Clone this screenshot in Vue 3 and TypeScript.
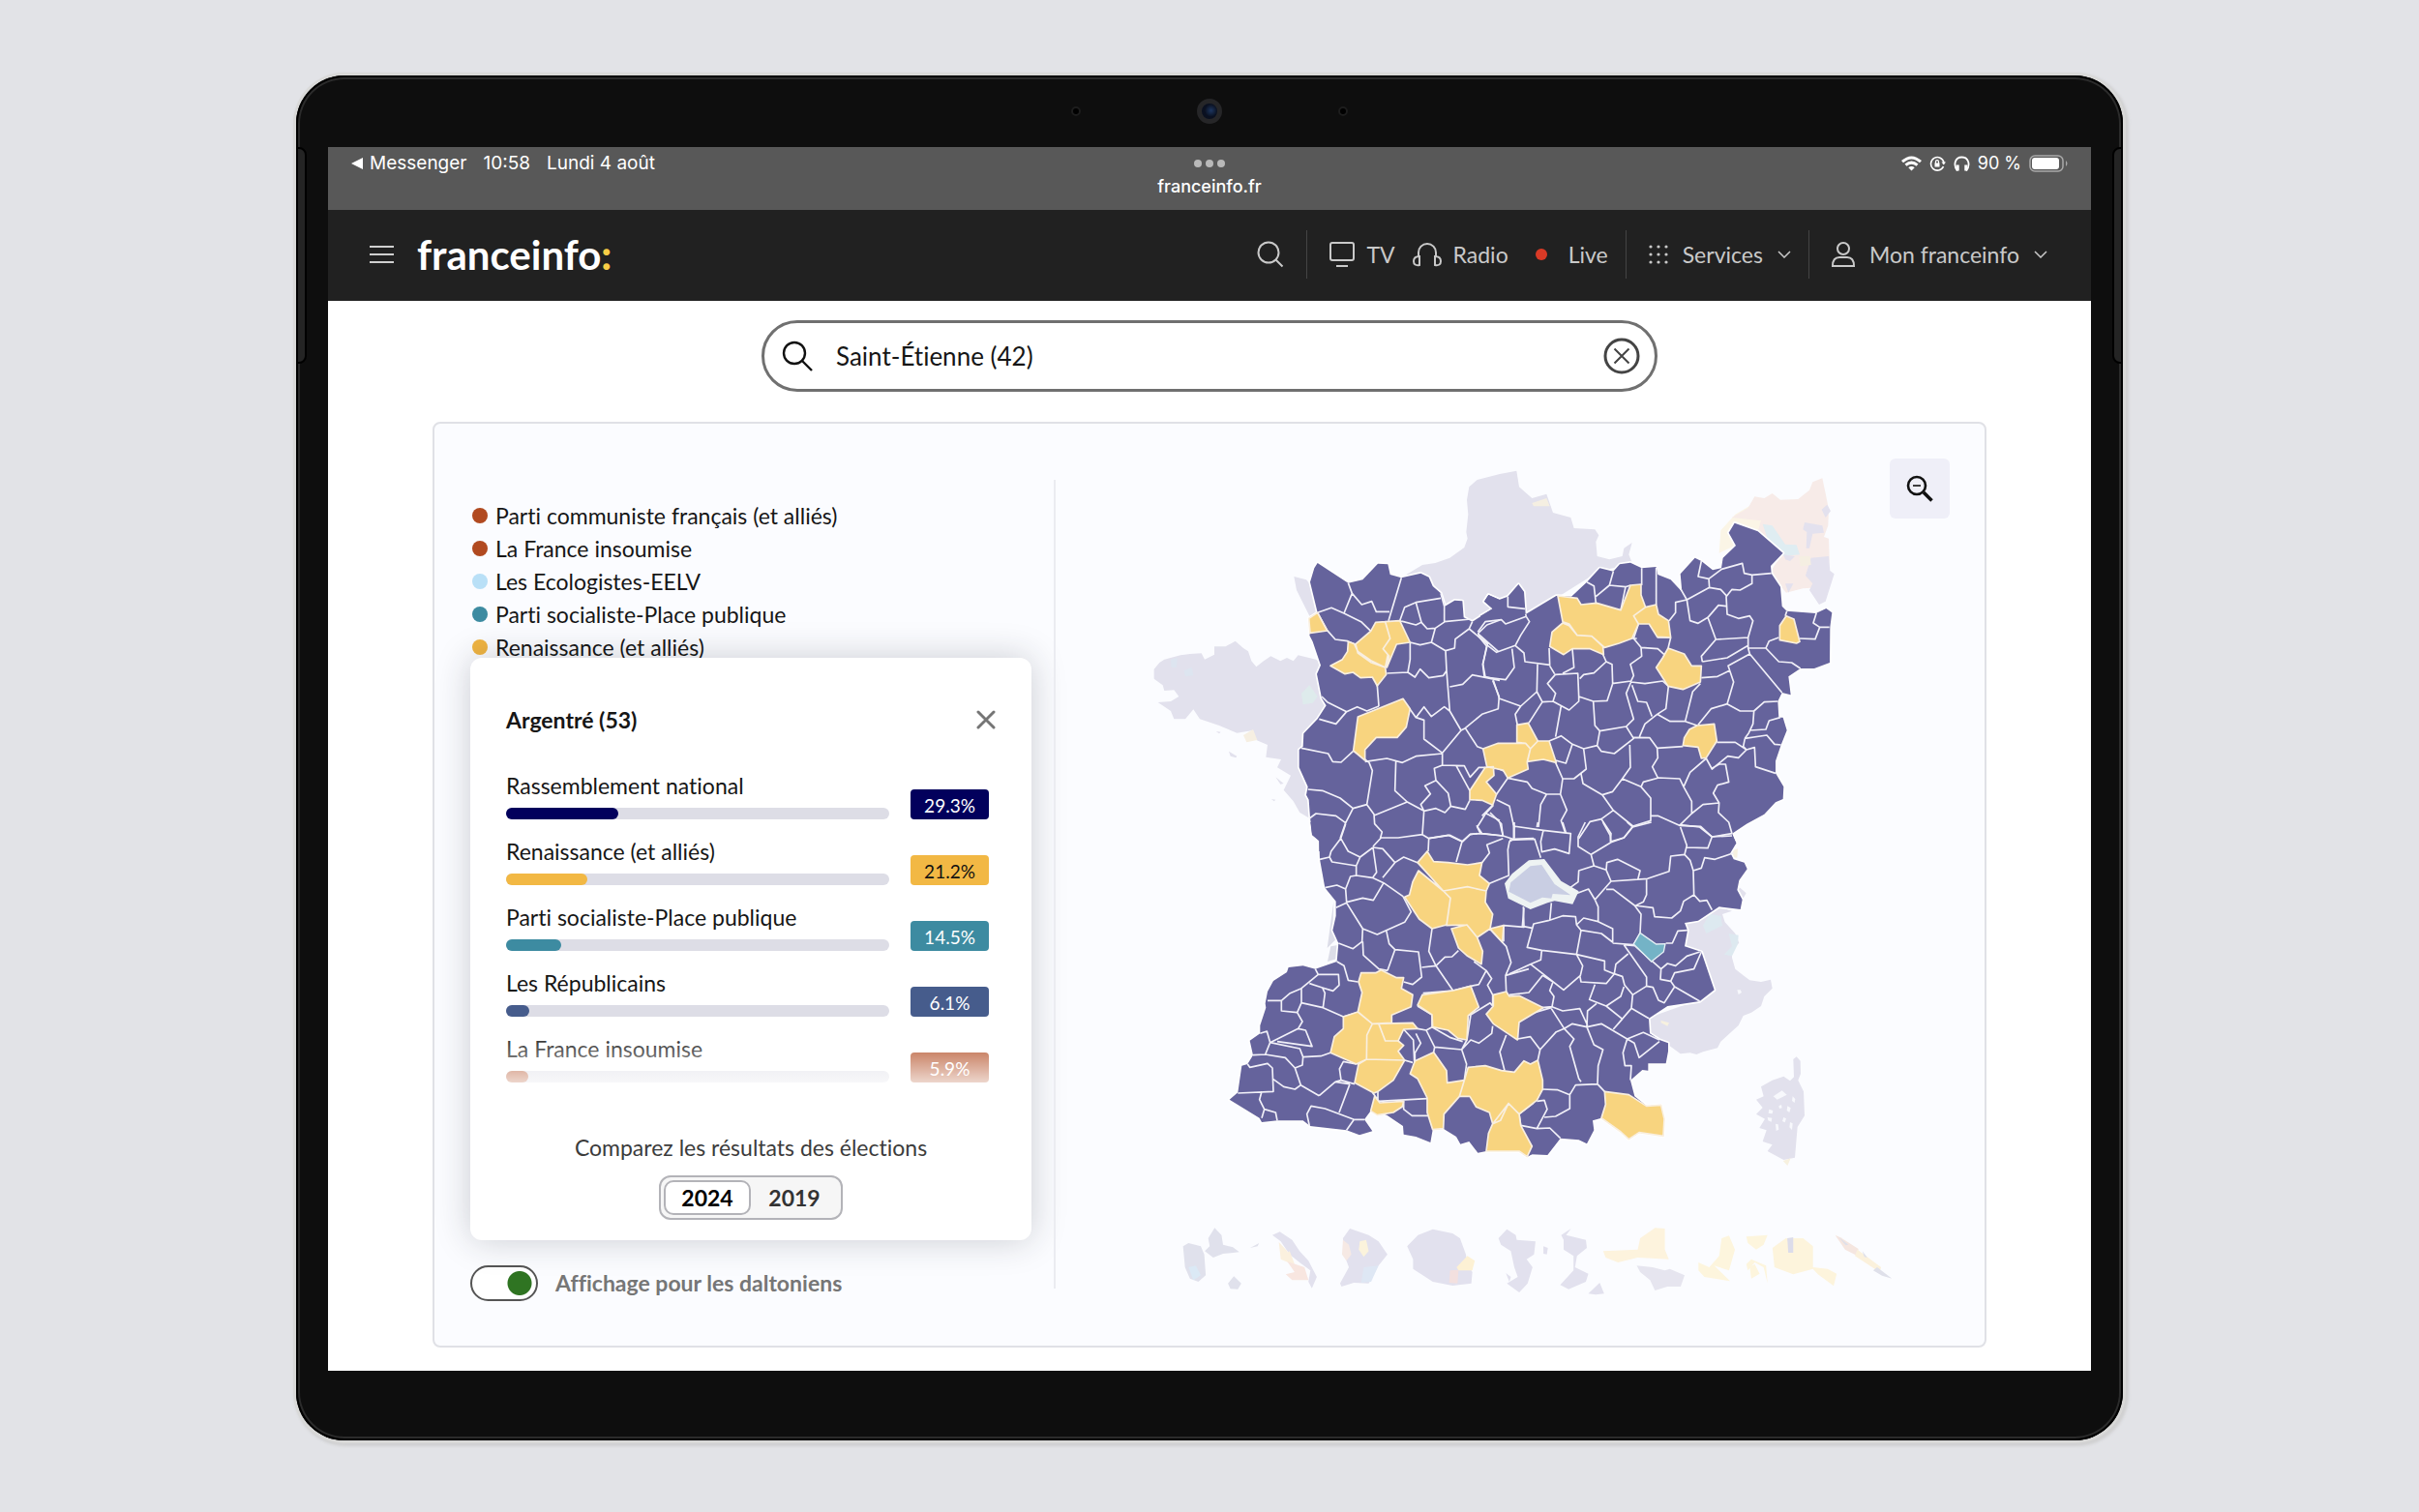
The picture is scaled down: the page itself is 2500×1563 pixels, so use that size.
<script setup lang="ts">
import { ref } from 'vue'

interface Party { name: string; color: string }
interface Score extends Party { value: number; ink: string }
interface Sector { at: string; land: string; lead: string; borders: string }

const commune = ref('Saint-Étienne (42)')
const year = ref('2024')
const colorBlind = ref(true)

const legend: Party[] = [
  { name: 'Parti communiste français (et alliés)', color: '#b14a20' },
  { name: 'La France insoumise', color: '#b14a20' },
  { name: 'Les Ecologistes-EELV', color: '#b9e0f7' },
  { name: 'Parti socialiste-Place publique', color: '#3d8ba1' },
  { name: 'Renaissance (et alliés)', color: '#f0b442' },
]

const scores: Score[] = [
  { name: 'Rassemblement national', color: '#02005c', value: 29.3, ink: '#fff' },
  { name: 'Renaissance (et alliés)', color: '#f2b844', value: 21.2, ink: '#111' },
  { name: 'Parti socialiste-Place publique', color: '#3d8ba1', value: 14.5, ink: '#fff' },
  { name: 'Les Républicains', color: '#465c8c', value: 6.1, ink: '#fff' },
  { name: 'La France insoumise', color: '#b14a20', value: 5.9, ink: '#fff' },
]

// Shapes are lists of "x,y" points separated by spaces; "|" starts a new shape.
const open = (s: string) => s.split('|').map(p => 'M' + p.trim().replace(/ /g, 'L')).join('')
const closed = (s: string) => s.split('|').map(p => 'M' + p.trim().replace(/ /g, 'L') + 'Z').join('')

const sectors: Sector[] = [
  {
    at: 'translate(60 0)',
    land: '1140,1260 580,1260 580,1228 558,1205 552,1155 548,1100 540,1085 545,1060 518,1000 518,945 530,935 532,895 575,850 602,808 588,785 573,710 585,683 560,610 550,590 552,583 548,538 575,520 552,425 565,382 575,366 670,428 715,418 762,368 793,370 800,402 835,412 895,398 920,410 932,438 957,460 970,500 1000,482 1024,484 1028,535 1055,548 1118,508 1092,485 1105,465 1140,480',
    lead: '575,520 548,538 552,583 605,576|740,577 755,550 785,548 800,600 778,632 793,650 785,690 740,668 700,640 690,620|785,548 830,545 862,612 820,618 790,690 797,655 778,632 800,600|670,610 693,618 700,645 742,675 785,690 788,712 760,747 745,720 708,722 685,705 660,710 615,685 652,665 668,640|700,843 840,787 862,818 850,875 822,907 757,907 722,945 722,978 686,948',
    borders: '670,428 682,460 657,522|682,460 712,495 743,485 757,517 798,517|575,520 618,505 657,522 710,548 740,577|835,412 795,545|575,520 605,575 630,603 668,608 690,618|830,545 845,503 880,488 957,475|880,488 897,550 915,570 940,568 970,548|830,545 880,558 897,550|957,460 968,500 968,548 1050,540|862,612 893,620 928,612 940,568|928,612 972,638 1000,630 1002,602 1045,570 1055,548|1045,570 1102,618 1087,680 1092,718 1140,730|1072,585 1100,558 1140,543|1072,585 1135,640|862,612 862,665 855,705 877,720 893,695 920,722 965,715 975,700 972,638|790,708 855,705|975,700 985,825 1020,885|985,750 1025,742 1055,713 1140,730|1118,730 1138,780 1135,818 1085,835 1033,878 1020,885 962,955|1033,878 1070,935 1088,942|760,745 765,810|588,780 605,797 665,827 698,812 728,825 765,810|862,820 880,845 905,812 928,842 968,812 985,825|665,827 632,865 580,850|880,845 905,853 905,912 962,955 962,993|722,982 790,972 838,985 880,965 962,957|525,940 608,957 622,982 648,984 685,950|688,948 735,985 745,1010 728,1115|818,978 815,1072 853,1107 905,1135|752,1148 853,1107|545,1068 590,1072 645,1095 685,1127 728,1115 750,1145 752,1175 775,1200 770,1218 825,1218 900,1208 920,1220 985,1210 1025,1230 1048,1207 1080,1205|550,1158 570,1143 632,1150 662,1172 645,1220|685,1127 662,1172|905,1135 900,1208|962,993 937,1003 942,1040 908,1057 925,1082 895,1115 905,1135 942,1127 970,1140 988,1120 1033,1130 1047,1102|942,1040 980,1080 988,1120|962,993 1030,995 1048,1030 1075,1000 1095,1000|1005,995 1047,1072|1120,1117 1097,1142 1070,1185 1080,1205 1150,1212|1097,1142 1140,1165',
  },
  {
    at: 'translate(1140 0)',
    land: '0,1260 0,530 38,508 12,485 25,465 58,480 85,470 118,432 135,455 140,525 235,468 282,470 330,425 370,382 412,392 432,370 465,365 500,382 545,378 550,402 590,418 625,455 620,400 665,350 685,360 720,388 747,382 752,350 792,312 770,272 788,242 860,268 938,335 900,375 902,398 930,440 935,500 950,515 1040,522 1072,507 1090,520 1084,565 1083,675 1035,693 992,693 955,718 962,775 935,768 922,795 925,845 938,845 950,885 932,930 915,980 915,1018 940,1060 938,1098 915,1108 880,1145 825,1175 780,1205 793,1235 765,1260',
    lead: '8,942 55,925 140,925 155,942 145,985 148,1005 85,1033 70,1008 20,998|15,1000 40,998 42,1025 18,1045 50,1083 38,1117 5,1102 -33,1100 -33,1072|240,468 300,475 312,495 360,490 435,512 465,435 498,432 498,465 512,503 475,530 490,555 470,600 430,615 385,628 345,593 300,590 275,555 255,548|215,625 222,580 255,552 275,560 300,590 345,593 380,625 382,650 340,632 285,632 258,650|512,503 545,495 552,525 583,545 590,597 548,595 523,555 490,555 475,530|582,630 632,648 655,685 685,685 682,735 628,758 582,748 545,690 565,660|928,560 948,530 972,540 990,610 980,615 928,605|113,868 148,862 178,918 155,942 140,925 113,922|178,918 213,918 235,985 195,975 145,982 155,942|632,908 648,882 672,870 725,865 733,918 700,970 685,972 675,937 628,932',
    borders: '85,470 85,502 138,508|-8,580 15,548 65,542 78,555 142,532 152,548 125,590 108,622 50,643 20,620|142,532 140,525|20,620 8,680 15,720 78,728 105,690 98,632|20,625 -8,590|108,622 135,645 138,672 215,682 213,630|40,730 60,790|177,680 175,765 125,810 60,787|125,810 108,835 115,870|175,765 192,797 150,862|192,797 225,795 233,770 208,740 232,712 302,708 305,780|225,795 275,822 305,795 305,780 350,795 393,793 410,740 408,680 390,672 380,650|215,685 230,710|285,632 290,690 255,708|308,725 320,712 352,707 390,672|250,810 233,905|350,795 355,870 370,887 452,873 475,910 415,957 375,950 362,932 370,887|452,873 475,850 452,770 467,735 510,740 565,732 583,748|408,740 467,732 475,715 465,680 500,655 498,628 475,600|498,628 550,632 570,650|470,745 488,795 515,798 532,842|548,835 575,818 583,748|548,835 588,857 635,857 672,870|635,857 658,765 682,740|685,722 735,718 775,698|675,868 715,818 765,803|688,672 765,660 830,622|688,672 685,655 730,603 830,597 845,545 835,530 800,538 765,525 762,470 780,448 805,450 842,430 842,403|765,803 785,735 768,685 835,648 935,768|765,803 805,825 848,825 880,797 922,795|835,648 830,630 885,630 925,672 965,675 992,693|885,630 895,608 925,597|830,597 830,630|848,825 845,865 832,893 820,910|835,885 885,882 895,855 930,845|820,910 888,900 912,928 932,930|820,910 815,935 825,945|733,922 790,922 825,945 800,970 767,965 718,1005 700,972|718,1003 740,990 760,990 770,1045 735,1055 722,1080 740,1110 690,1115 655,1143|825,945 850,938 853,998 915,1018|640,480 605,488 605,520 585,545|640,480 650,545 675,553 705,535 738,497 762,500|705,535 730,603|640,480 710,442 745,448 765,470|710,442 708,415 748,385 812,367 818,398 842,403 902,398|685,360 675,408 708,415|620,445 640,480|545,380 545,495|500,382 500,435|330,425 352,437 358,490|358,470 400,435 450,440 435,512|400,435 412,392|450,440 465,435|475,600 490,555|485,600 470,600|548,597 590,597|590,597 582,630|950,515 945,530|990,600 1038,602 1052,565 1082,565|1052,565 1032,552 1042,520|628,935 548,940 550,970 533,998 550,1032|475,907 525,908 548,940|493,905 510,865 548,835|463,930 465,1000 440,1035 410,1075 378,1085 318,1050 312,1020|440,1035 498,1060 505,1045 553,1032 618,1035 630,1060 655,1105 655,1143 617,1180|700,972 650,1015 630,1060|498,1060 528,1095 528,1165 473,1182 412,1133 378,1085|412,1133 375,1160 340,1168 305,1220|375,1160 405,1205 403,1230 445,1218 473,1182|528,1150 550,1150 617,1180 683,1183 718,1215 780,1205|740,1110 738,1140 770,1170 780,1205|233,985 255,1035 290,1035 328,1005 320,942 285,928 250,902 233,910 213,918|285,928 265,987 233,978|320,942 362,932|255,1035 248,1083 205,1083 160,1065 145,1045 85,1033 50,1083|205,1083 187,1115 180,1185|248,1083 268,1132 250,1165 262,1200|50,1100 90,1120 103,1180|40,998 82,1015 85,1033|30,1140 65,1175 70,1215|5,1150 38,1117',
  },
  {
    at: 'translate(240 1170)',
    land: '1060,0 1060,1030 1045,1037 1020,1020 918,1020 892,1025 865,990 838,998 825,975 785,950 752,953 745,993 700,975 662,968 660,942 610,908 595,903 580,908 560,895 540,922 565,958 525,970 485,955 372,942 350,925 270,925 222,930 215,917 122,860 148,838 160,755 178,750 195,722 185,677 217,655 217,630 235,575 233,562 240,525 258,492 300,465 305,450 350,445 388,455 455,432 460,375 442,335 452,290 452,245 418,203 402,115 400,58 378,40 373,0',
    lead: '735,90 755,122 800,125 860,132 905,125 897,165 928,190 918,213 860,200 785,213 705,125|708,150 785,213 807,235 795,318 750,330 710,300 665,232 680,225 690,185|807,235 785,213 860,200 918,213 915,248 938,285 930,330 890,357 858,318 795,320|810,330 858,318 890,357 907,400 903,440 860,415 832,390|530,467 575,467 592,458 640,482 662,482 655,515 690,535 685,572 625,598 625,622 565,625 520,588 533,528 522,495|520,588 565,625 548,660 547,735 515,750 435,715 447,665 475,640 475,603|565,625 690,622 705,640 662,642 645,678 662,692 645,710 665,738 547,735 548,660|547,735 665,738 630,800 582,835 570,840 510,808 522,750|572,850 588,870 662,865 658,882 630,900 580,908 560,895|720,535 815,522 870,508 895,573 862,600 858,675 830,670 800,645 752,635 750,597 705,567|697,740 755,713 795,770 797,808 850,800 835,850 787,905 785,950 752,953 735,900 735,855 705,795 682,780|862,760 915,755 965,770 1005,775 1035,740 1055,750 1078,738 1093,800 1093,828 1075,862 1020,905 987,872 962,925 938,935 928,900 887,883 867,850 835,850 850,800|987,872 1020,905 1025,940 1060,1005 1045,1037 1020,1020 918,1020 925,965 938,935|940,535 980,525 990,540 1020,538 1095,575 1020,620 1015,675 985,655 940,625 918,595 940,570|930,330 972,320 968,372',
    borders: '402,115 432,108 437,90 467,50 482,5|467,50 490,90 527,108 515,135 515,165|432,108 440,123 515,135|418,203 455,195 482,207 497,168 515,165 565,172 600,188 660,230|482,207 485,248 535,235 568,242 600,188|452,265 485,250 535,330 580,348 608,335 665,310 685,278 660,230|567,78 578,155 567,170|567,78 597,82 635,125 597,172|567,78 527,108|592,48 567,75|740,50 738,90|740,50 800,40 843,60 825,123|635,125 662,108 705,125|843,60 868,38 890,35|888,10 905,35 970,42 1000,52|960,0 970,42|1003,0 1003,52 990,60 985,85 988,165 928,190|905,125 928,95 920,70 970,50|1003,52 1065,50|535,330 533,370 505,392 460,375|535,370 537,412 585,455 612,460|608,335 617,377 635,395 612,460|635,395 708,402 718,480 690,503 662,495|718,450 762,445 815,522|762,445 740,400 750,330|762,445 790,418 812,417 832,398|722,530 815,522 870,508 895,503 918,460 880,432|918,460 935,485 922,505 938,535 938,570|928,330 980,385 995,435 978,475 980,525|978,475 1050,455|972,370 972,320 1035,325 1033,262|455,432 477,445 490,490 520,495|388,455 397,472 460,472 462,505 443,523 410,513 370,500|397,472 345,515 310,530 283,553 240,553|345,515 345,560 332,590 283,585 283,553|410,513 418,530 412,575 345,560|412,575 475,603 520,590|332,590 348,618 335,640 248,683|335,640 358,645 378,695 270,680|217,655 238,648 248,683 233,720 195,722|233,720 295,730 325,762 348,753 350,728 405,725 435,715|350,728 340,702 248,683|325,762 343,815 400,848|178,750 185,760 240,748 255,762 258,835 148,840|258,797 290,820 325,828 343,815|400,848 450,805 495,812|468,800 463,765 475,742 515,750|450,805 468,800 510,812|495,812 462,900|222,835 215,860 230,890 222,917|230,890 265,900 270,925|370,942 362,905 375,880 418,888 508,922 485,955|508,922 540,922|565,838 585,865 735,857|582,835 582,860|662,865 662,890 688,910 745,910|690,745 665,738|690,780 697,740|705,570 750,597 750,635 732,645 705,640|750,635 805,667 845,680|732,645 758,697 842,705 857,750 850,800|758,697 755,713|697,740 697,715 715,685 700,655|662,642 692,675 695,740|842,705 870,675 895,685 935,655 938,632|858,675 870,597 930,560 938,570|842,705 858,675|980,660 960,712 975,770',
  },
  {
    at: 'translate(1230 1170)',
    land: '0,0 690,0 690,35 703,65 685,95 695,115 728,125 737,145 712,180 706,210 722,240 716,270 650,262 585,305 543,312 552,335 543,385 595,402 635,520 590,555 490,570 432,608 435,655 465,675 492,685 492,710 485,748 430,748 430,770 412,768 375,800 388,850 425,880 470,877 480,920 477,973 402,962 370,983 345,960 285,917 258,925 262,955 240,997 215,985 158,980 118,1032 68,1030 55,1037 30,1020 0,1020',
    lead: '295,835 370,845 425,880 470,877 480,920 477,973 402,962 370,983 345,960 285,917 298,875',
    borders: '15,0 15,50|12,12 105,25 190,35 185,97 140,83 100,92 97,60 105,25|0,55 78,52 97,110|88,0 85,15|165,0 175,32|235,0 213,45 213,75 253,100 315,62 312,40 290,0|315,62 355,48 382,15 440,0|382,15 365,0|253,100 262,135 300,148 315,183 265,240|262,135 215,150 213,185 185,205|300,148 302,125 335,115 405,150 398,178|315,183 428,175 495,152 500,105 543,100 550,72 530,15|543,100 560,118 570,150 572,225 590,245 612,242 628,272|570,150 595,142 605,110 637,115 695,95|550,78 615,80 628,45 590,15 530,8|628,45 690,42|425,178 425,225 415,247 388,260|300,208 322,208 388,258 408,285 405,345 385,380 320,375|388,258 445,265 450,293 503,297 530,275 540,245 572,225|265,240 275,262 275,308|265,240 245,207 205,222|275,308 230,297 208,318 205,293 165,290 120,305 75,315 55,388 100,397 208,410 222,335 208,318|275,308 320,330 320,372 285,345 222,335|130,250 125,305|45,265 40,322 70,328|100,397 97,427 65,440 0,470|65,440 168,520 220,475 227,445 208,410 295,430 295,458 325,470 350,478 357,505 382,535 425,508 445,512 462,552 480,560 512,510|325,470 330,440 368,408|355,380 390,383|355,380 425,480 425,508|325,470 300,500 222,495 218,475|385,380 470,455 468,487 500,493|470,455 490,438 515,445 550,415 590,402|512,510 500,493 512,467 572,455 595,402|512,510 590,555|485,375 505,375 522,337 552,335|265,503 248,550 300,570 350,610 322,642|300,570 345,540 355,510|240,635 242,585 270,562|382,535 378,577 432,608|378,577 322,642|0,535 60,528 103,475|103,475 135,495 125,522 138,540 132,572|100,575 132,572 165,585 218,578 242,630|130,578 170,640 145,650 95,705|170,640 195,625 240,635 285,625 365,672 415,652 465,675|25,620 25,672 65,665 95,705 88,738|25,620 60,595 130,575|170,640 200,672 187,695 215,795 222,805|240,635 262,690 290,705 275,755 273,812|103,828 150,830 187,845 205,815 273,812 295,835|187,845 187,888 143,912 108,915|85,950 117,890 108,862 85,865|30,905 35,940 85,950 125,948 158,980|365,672 352,715 358,755 378,755 375,800|365,672 387,685 402,730 465,680|30,905 75,870',
  },
]

const mutedNorth = '-230,402 -180,372 -140,366 -95,350 -50,318 -40,290 -44,270 -38,215 -42,170 -35,130 -10,108 60,90 112,80 120,130 160,165 205,152 225,210 280,225 290,258 355,262 367,280 358,300 362,345 400,355 440,345 445,320 470,303 460,340 472,370 370,390 235,475 140,530 -50,545 -110,500 -150,430'
const mutedWest = '68,695 85,675 100,665 150,652 180,648 215,646 225,665 255,650 255,625 290,625 320,608 345,630 360,640 370,670 385,688 405,672 430,655 460,670 480,660 500,670 515,652 570,665 600,683 610,800 545,900 555,1160 520,1140 500,1105 470,1070 492,1025 450,1000 462,975 415,968 420,930 385,915 375,885 325,893 270,870 210,850 190,820 165,850 130,850 120,825 80,798 120,795 145,780 130,760 100,762 95,745 68,725|502,408 540,418 560,440 585,520 550,530 510,450|300,950 325,965 322,970 305,965|445,1030 470,1050 460,1052|432,1098 445,1100 440,1105|260,888 275,890 270,895'
const mutedSouthEast = '543,312 585,300 650,262 690,275 660,285 668,310 700,345 712,375 690,390 690,420 700,455 725,475 745,490 780,495 810,488 815,515 790,540 780,570 750,590 725,600 710,630 655,680 645,700 600,712 580,720 560,715 530,718 492,690 435,665 425,608 590,550 625,520 585,402 540,390|880,735 890,727 902,740 903,780 895,800 912,835 915,910 893,945 885,1040 850,1047 800,1020 815,1000 785,990 797,955 775,948 792,920 765,905 785,885 765,860 788,850 780,820 815,800 850,788 870,802 882,790|706,210 715,203 734,220 722,240'

const overseas = [
  { color: '#e0e1ec', shape: '64,625 75,615 100,625 107,650 110,715 95,735 78,725 68,690|115,600 128,568 142,590 145,620 165,628 178,643 145,648 125,660 108,640 118,625|155,740 167,718 182,740 175,758 160,757|200,630 218,615 215,625' },
  { color: '#dbe9f5', shape: '75,690 90,685 100,715 85,730' },
  { color: '#e2e1ee', shape: '245,590 260,580 285,605 300,640 318,670 335,720 325,755 318,735 322,700 300,675 280,650 262,610' },
  { color: '#fbf0de', shape: '258,612 275,640 285,680 262,665|270,650 280,640 290,680 280,675' },
  { color: '#f8e6e0', shape: '275,672 310,690 318,730 285,730 272,712 290,705' },
  { color: '#e2e1ee', shape: '388,600 402,570 440,590 460,610 478,650 460,685 440,740 410,738 385,750 382,740 400,690 390,650' },
  { color: '#f6e9e4', shape: '388,605 400,620 405,650 395,670 386,650' },
  { color: '#fbf3dc', shape: '422,610 435,605 440,640 430,658 420,635' },
  { color: '#dee7f4', shape: '430,690 460,685 445,735 425,738' },
  { color: '#e2e1ee', shape: '518,625 540,590 570,572 610,585 625,600 637,650 640,680 650,705 648,740 610,747 570,735 530,695 530,665' },
  { color: '#fdf1d4', shape: '618,690 640,655 655,670 650,700 622,700' },
  { color: '#f3e0df', shape: '605,700 622,698 620,740 603,738' },
  { color: '#e2e1ee', shape: '703,600 720,572 738,590 740,605 778,610 775,650 760,665 772,690 762,740 745,768 720,740 742,720 735,690 728,640 708,620|718,708 728,720 725,735|794,625 803,630 801,650 794,648' },
  { color: '#e2e1ee', shape: '830,590 850,570 840,590 880,605 882,630 862,655 858,690 885,710 880,735 845,758 828,745 855,700 855,655 835,635 835,605|885,772 908,738 917,772 900,775' },
  { color: '#fdf3dd', shape: '915,640 985,635 990,600 1020,568 1040,570 1040,635 1048,665 985,660 945,675 920,660' },
  { color: '#e6e5ef', shape: '983,685 1015,690 1040,700 1050,695 1080,715 1072,750 1045,750 1020,762 1010,730 990,705' },
  { color: '#fdf5dd', shape: '1108,675 1130,690 1150,655 1155,600 1170,592 1182,635 1170,700 1140,685 1172,733 1120,720 1108,700|1205,595 1248,590 1240,620 1225,635 1208,615|1205,680 1215,665 1245,685 1248,740 1240,690 1222,675 1208,700|1212,690 1222,680 1232,710 1215,725' },
  { color: '#fdf4dc', shape: '1258,630 1285,600 1320,600 1340,625 1340,690 1370,695 1388,710 1382,748 1350,712 1340,695 1300,712 1262,690' },
  { color: '#dcdcea', shape: '1288,600 1300,597 1300,645 1290,645' },
  { color: '#f5e6e0', shape: '1385,590 1396,598 1432,633 1430,655 1405,635' },
  { color: '#fbf1dc', shape: '1430,635 1478,690 1475,705 1425,655' },
  { color: '#dfe0ea', shape: '1470,690 1500,725 1480,716 1462,700|1440,640 1450,660 1444,658|1392,596 1412,620 1406,622' },
]
</script>

<template>
  <div class="page">
    <div class="device">
      <span class="edge edge-left"></span>
      <span class="edge edge-right"></span>
      <div class="sensors"><i class="sensor"></i><i class="lens"></i><i class="sensor"></i></div>
      <div class="screen">
        <div class="status">
          <div class="status-side">
            <svg class="back" viewBox="0 0 12 14"><path d="M12 1v12L0 7z" fill="currentColor" /></svg>
            <span>Messenger</span><span class="clock">10:58</span><span>Lundi 4 août</span>
          </div>
          <div class="status-mid">
            <div class="dots"><i></i><i></i><i></i></div>
            <span>franceinfo.fr</span>
          </div>
          <div class="status-side status-right">
            <svg width="21" height="16" viewBox="0 0 21 16" fill="none" stroke="currentColor" stroke-width="3"><path d="M1 6.200q9.500-8.500 19 0M4.500 9.600q6-5 12 0" /><path d="M7.300 12.200q3.200-2.600 6.400 0L10.500 15.500z" fill="currentColor" stroke="none" /></svg>
            <svg width="17" height="17" viewBox="0 0 17 17" fill="none" stroke="currentColor" stroke-width="1.600"><path d="M14.500 11.200A6.800 6.800 0 1 1 15 7" /><path d="M12.500 6.500h4.500l-2.200 3z" fill="currentColor" stroke="none" /><rect x="5.500" y="7.500" width="5" height="4" fill="currentColor" stroke="none" /><path d="M6.500 8V6.200a1.500 1.500 0 0 1 3 0V8" stroke-width="1.200" /></svg>
            <svg width="17" height="17" viewBox="0 0 17 17" fill="none" stroke="currentColor" stroke-width="1.800"><path d="M4 15.500C-.5 10 1 1.500 8.500 1.500s9 8.500 4.500 14" /><path d="M4.200 9.500v6M12.800 9.500v6" stroke-width="3" /></svg>
            <span class="charge">90 %</span>
            <svg width="40" height="18" viewBox="0 0 40 18" fill="none"><rect x="1" y="1" width="34" height="16" rx="5" stroke="#a9a9a9" stroke-width="1.500" /><rect x="3" y="3" width="28" height="12" rx="3" fill="#fff" /><path d="M38 6q3 3 0 6z" fill="#a9a9a9" /></svg>
          </div>
        </div>

        <header class="topbar">
          <button class="plain" aria-label="Menu">
            <svg width="25" height="20" viewBox="0 0 25 20" stroke="#d0d0d0" stroke-width="2"><path d="M0 2h25M0 10h25M0 18h25" /></svg>
          </button>
          <a class="brand" href="#">franceinfo<b>:</b></a>
          <nav class="nav">
            <button class="plain find" aria-label="Rechercher">
              <svg width="28" height="28" viewBox="0 0 28 28" fill="none" stroke="currentColor" stroke-width="2"><circle cx="12" cy="12" r="10.500" /><path d="M19.500 19.500l7 7" /></svg>
            </button>
            <div class="group media">
              <a href="#"><svg width="26" height="28" viewBox="0 0 26 28" fill="none" stroke="currentColor" stroke-width="2"><rect x="1" y="2" width="24" height="18" rx="2" /><path d="M7 26h12" /></svg>TV</a>
              <a href="#"><svg width="30" height="26" viewBox="0 0 30 26" fill="none" stroke="currentColor" stroke-width="2"><path d="M6 15V11a9 9 0 0 1 18 0v4M7 15q-6 0-6 5t6 4zM23 15q6 0 6 5t-6 4z" /></svg>Radio</a>
              <a href="#" class="live"><i></i>Live</a>
            </div>
            <div class="group">
              <button class="plain"><svg width="20" height="22" viewBox="0 0 20 22" fill="currentColor"><template v-for="x in [0, 8, 16]" :key="x"><circle v-for="y in [0, 8, 16]" :key="y" :cx="x + 2" :cy="y + 3" r="1.600" /></template></svg>Services<svg width="14" height="8" viewBox="0 0 14 8" fill="none" stroke="currentColor" stroke-width="1.500"><path d="M1 1l6 6 6-6" /></svg></button>
            </div>
            <div class="group">
              <button class="plain user"><svg width="24" height="28" viewBox="0 0 24 28" fill="none" stroke="currentColor" stroke-width="2"><circle cx="12" cy="8" r="6" /><path d="M1 26q0-9 7-9h8q7 0 7 9z" /></svg>Mon franceinfo<svg width="14" height="8" viewBox="0 0 14 8" fill="none" stroke="currentColor" stroke-width="1.500"><path d="M1 1l6 6 6-6" /></svg></button>
            </div>
          </nav>
        </header>

        <main class="content">
          <form class="search" @submit.prevent>
            <svg width="32" height="32" viewBox="0 0 32 32" fill="none" stroke="#111" stroke-width="2.400"><circle cx="13" cy="13" r="11" /><path d="M21 21l10 10" /></svg>
            <input v-model="commune" type="text" aria-label="Commune" />
            <button type="button" class="plain" aria-label="Effacer" @click="commune = ''">
              <svg width="38" height="38" viewBox="0 0 38 38" fill="none" stroke="#444"><circle cx="19" cy="19" r="17" stroke-width="3" /><path d="M11.500 11.500l15 15m0-15l-15 15" stroke-width="2" /></svg>
            </button>
          </form>

          <section class="panel">
            <div class="results">
              <ul class="legend">
                <li v-for="p in legend" :key="p.name"><i :style="{ background: p.color }"></i>{{ p.name }}</li>
              </ul>

              <article class="card">
                <div class="card-head">
                  <h2>Argentré (53)</h2>
                  <button class="plain" aria-label="Fermer"><svg width="20" height="20" viewBox="0 0 20 20" stroke="#757575" stroke-width="3" stroke-linecap="round"><path d="M2 2l16 16m0-16L2 18" /></svg></button>
                </div>
                <ul class="scores">
                  <li v-for="s in scores" :key="s.name">
                    <div class="score">
                      <span>{{ s.name }}</span>
                      <div class="track"><div class="fill" :style="{ width: s.value + '%', background: s.color }"></div></div>
                    </div>
                    <strong :style="{ background: s.color, color: s.ink }">{{ s.value }}%</strong>
                  </li>
                </ul>
                <p class="compare">Comparez les résultats des élections</p>
                <div class="years">
                  <button v-for="y in ['2024', '2019']" :key="y" :class="{ on: y === year }" :aria-pressed="y === year" @click="year = y">{{ y }}</button>
                </div>
              </article>

              <label class="switch"><input v-model="colorBlind" type="checkbox" /><span>Affichage pour les daltoniens</span></label>
            </div>

            <div class="map">
              <svg class="france" viewBox="0 0 2400 2700" role="img" aria-label="Carte des résultats">
                <g fill="#e2e1ed">
                  <path transform="translate(1140 0)" :d="closed(mutedNorth)" />
                  <path transform="translate(60 0)" :d="closed(mutedWest)" />
                  <path transform="translate(1230 1170)" :d="closed(mutedSouthEast)" />
                  <path transform="translate(240 1170)" d="M445 245L425 390L455 360L442 335zM436 385L426 432L465 420L462 380z" fill="#dcdde8" />
                </g>
                <g fill="#f7f8fc" transform="translate(1230 1170)">
                  <path d="M818 850L845 832L860 845L830 860zM805 890l12 4-2 10-12-2zM835 880l8-4 2 10-8 2zM862 880l10 6-4 14-8-6zM850 915l8 4-4 12-8-4zM800 915l14 2-2 12-10-4zM825 935l8 2 2 16-8 4zM870 930l8 4-2 20-8-8zM878 850l8 8-2 12-8-6zM706 520l10 0 4 8-10 6z" />
                </g>
                <g transform="translate(1140 0)">
                  <path d="M740 335L745 265L790 215L850 180L880 255L860 275L792 242L770 275L790 312z" fill="#fbf5e6" />
                  <path d="M780 225L830 195L850 160L880 165L905 150L930 170L985 168L1020 140L1030 115L1060 103L1070 150L1080 200L1078 250L1065 285L1080 290L1082 350L1075 440L1000 445L948 458L925 430L895 398L938 335L860 268L870 235z" fill="#f7ebe8" />
                  <path d="M875 245L905 250L945 308L980 310L990 340L940 345L890 290z" fill="#dfedf2" />
                  <path d="M1058 200L1075 185L1086 205L1070 225zM1005 240L1060 250L1065 272L1030 275L1020 320L1010 320L1012 270L1000 262zM1025 350L1080 345L1084 390L1097 400L1070 485L1050 495L1020 450L1030 430L1008 405zM940 340L975 345L960 360L945 355zM945 430L970 430L955 458z" fill="#e3e1ee" />
                  <path d="M988 345L1022 345L1025 372L992 376zM160 180L205 165L215 190L165 190z" fill="#f5efe2" />
                </g>
                <path transform="translate(1230 1170)" d="M848 1050L872 1042L862 1065zM685 90L708 82L706 110L690 108zM470 615L495 622L490 632L470 622z" fill="#f7f1e0" />
                <path transform="translate(1230 1170)" d="M620 285L655 290L660 320L610 345L600 320zM680 345L710 350L708 378L690 415L665 410L690 385z" fill="#dde9f0" />
                <path transform="translate(60 0)" d="M525 770L550 745L575 780L560 800L530 805z" fill="#deebec" />
                <path transform="translate(60 0)" d="M160 700L185 690L190 715L165 718zM120 665L140 660L138 690L122 690z" fill="#dde5f0" />
                <path transform="translate(60 0)" d="M345 900L375 882L388 915L355 922z" fill="#f6efe2" />
                <g fill="none" stroke="#fff" stroke-width="10" stroke-linejoin="round">
                  <path v-for="s in sectors" :key="s.at" :transform="s.at" :d="closed(s.land)" />
                </g>
                <g fill="#65639c">
                  <path v-for="s in sectors" :key="s.at" :transform="s.at" :d="closed(s.land)" />
                </g>
                <g fill="none" stroke="#f1f0f8" stroke-width="5" stroke-linejoin="round">
                  <path v-for="s in sectors" :key="s.at" :transform="s.at" :d="open(s.borders)" />
                </g>
                <g fill="#f8d47f" stroke="#f9efe0" stroke-width="5" stroke-linejoin="round">
                  <path v-for="s in sectors" :key="s.at" :transform="s.at" :d="closed(s.lead)" />
                  <path transform="translate(240 1170)" d="M585 626L605 678L645 678" fill="none" />
                </g>
                <g transform="translate(1230 1170)">
                  <path d="M405 343L455 378L483 377L478 402L440 432L385 378z" fill="#74b3c6" stroke="#e6f0f5" stroke-width="4" />
                  <path d="M-15 190L8 160L60 118L108 114L160 182L215 214L196 254L140 244L118 250L65 270L-4 236z" fill="#eef3f3" />
                  <path d="M4 187L65 136L100 132L140 192L190 226L134 222L130 236L102 233L65 250L-2 215z" fill="#c9cee3" />
                </g>
                <g transform="translate(120 1860) scale(1.5306 1)">
                  <path v-for="(o, n) in overseas" :key="n" :d="closed(o.shape)" :fill="o.color" />
                </g>
              </svg>
              <button class="zoom" aria-label="Dézoomer">
                <svg width="28" height="28" viewBox="0 0 28 28" fill="none" stroke="#111"><circle cx="11" cy="11" r="9" stroke-width="2.600" /><path d="M7 11h8" stroke-width="1.600" /><path d="M18 18l8.500 8.500" stroke-width="3.600" /></svg>
              </button>
            </div>
          </section>
        </main>
      </div>
    </div>
  </div>
</template>

<style>
body { margin: 0; background: #e2e3e7; }
</style>

<style scoped>
* { box-sizing: border-box; }
.page { padding: 78px 306px 74px; font-family: Lato, "Open Sans", sans-serif; font-variant-ligatures: none; color: #161616; }
.device { position: relative; padding: 0 33px 72px; background: #0e0e0e; border-radius: 50px; box-shadow: inset 0 0 0 2px #000, inset 0 0 0 4px #2b2b2b, 0 0 0 3px #d9d9d8, 2px 2px 3px 4px #d0d0d1; }
.edge { position: absolute; top: 74px; width: 11px; height: 224px; background: #242424; border: 2px solid #000; }
.edge-left { left: 0; border-radius: 0 8px 8px 0; }
.edge-right { right: 0; border-radius: 8px 0 0 8px; }
.sensors { height: 74px; display: flex; align-items: center; justify-content: center; gap: 120px; }
.sensor { width: 10px; height: 10px; border-radius: 50%; background: #000; border: 2px solid #1d1d1d; }
.lens { width: 26px; height: 26px; border-radius: 50%; border: 5px solid #262628; background: radial-gradient(circle at 60% 45%, #1d3660, #0a1020 50%); }
.screen { background: #fff; }

.status { height: 65px; padding: 6px 24px; display: grid; grid-template-columns: 1fr auto 1fr; background: #585858; color: #fff; font: 400 19px/22px Inter, sans-serif; }
.status-side { display: flex; align-items: center; height: 22px; }
.back { width: 12px; height: 14px; margin-right: 7px; }
.clock { margin: 0 17px; }
.status-mid { text-align: center; font-size: 18px; font-weight: 500; line-height: 26px; }
.charge { font-size: 18px; }
.dots { display: flex; justify-content: center; align-items: center; gap: 4px; height: 22px; }
.dots i { width: 8px; height: 8px; border-radius: 50%; background: #b9b9b9; }
.status-right { justify-content: flex-end; gap: 8px; }

.plain { display: flex; align-items: center; padding: 0; border: 0; background: none; color: inherit; font: inherit; }
.topbar { height: 94px; padding: 0 45px 2px 43px; display: flex; align-items: center; background: #212121; color: #c9c9c9; }
.brand { margin-left: 24px; color: #fff; font-size: 42px; font-weight: 700; line-height: 46px; text-decoration: none; }
.brand b { color: #f7cd46; }
.nav { margin-left: auto; display: flex; align-items: center; font-size: 23px; line-height: 28px; }
.find { margin-right: 23px; }
.group { height: 50px; padding: 0 18px 0 23px; display: flex; align-items: center; border-left: 1px solid #444; }
.group:last-child { padding-right: 0; }
.group a { display: flex; align-items: center; gap: 12px; color: inherit; text-decoration: none; }
.group button { gap: 15px; }
.media { gap: 18px; }
.live i { width: 12px; height: 12px; margin: 0 10px; border-radius: 50%; background: #d93a26; }

.content { padding: 20px 108px 24px; }
.search { width: 926px; max-width: 100%; height: 74px; margin: 0 auto 31px; padding: 0 15px 0 18px; display: flex; align-items: center; border: 3px solid #707070; border-radius: 37px; }
.search input { flex: 1; min-width: 0; margin-left: 24px; padding: 0; border: 0; outline: 0; background: none; color: #161616; font: 400 26px/32px Lato, sans-serif; font-variant-ligatures: none; }

.panel { display: flex; border: 2px solid #e0e1e6; border-radius: 8px; background: #fbfcff; }
.results { position: relative; flex: none; width: 642px; padding: 78px 25px 45px 37px; }
.results::after { content: ""; position: absolute; top: 58px; right: 0; bottom: 59px; width: 2px; background: #ebecf1; }
.legend { height: 164px; margin: 0; padding: 0 0 0 2px; list-style: none; font-size: 23px; line-height: 34px; }
.legend li { display: flex; align-items: center; gap: 8px; }
.legend i { width: 16px; height: 16px; border-radius: 50%; }
.card { position: relative; padding: 48px 37px 21px; border-radius: 12px; background: #fff; box-shadow: 0 0 36px rgba(30, 35, 50, 0.22); }
.card-head { height: 32px; display: flex; align-items: center; justify-content: space-between; }
.card-head h2 { margin: 0; font-size: 23px; font-weight: 700; line-height: 32px; }
.scores { position: relative; margin: 0; padding: 38px 7px 0 0; list-style: none; }
.scores::after { content: ""; position: absolute; left: 0; right: 0; bottom: -16px; height: 70px; background: linear-gradient(rgba(255, 255, 255, 0), #fff); }
.scores li { display: flex; align-items: flex-end; gap: 22px; font-size: 23px; line-height: 28px; }
.scores li + li { margin-top: 19px; }
.score { flex: 1; }
.track { height: 12px; margin-top: 9px; border-radius: 6px; background: #dddde6; }
.fill { height: 12px; border-radius: 6px; }
.scores strong { width: 81px; height: 31px; border-radius: 4px; text-align: center; font-size: 19px; font-weight: 400; line-height: 34px; }
.compare { margin: 51px 0 13px; text-align: center; color: #3c3c3c; font-size: 23px; line-height: 32px; }
.years { width: 190px; height: 46px; margin: 0 auto; padding: 3px; display: flex; border: 2px solid #b3b3b8; border-radius: 12px; background: #f6f6f6; }
.years button { flex: 1; padding: 0; border: 2px solid transparent; border-radius: 10px; background: none; color: #333; font: 700 23px/32px Lato, sans-serif; }
.years .on { border-color: #b3b3b8; background: #fff; color: #000; }
.switch { display: flex; align-items: center; gap: 18px; width: max-content; margin-top: 26px; color: #767676; font-size: 23px; font-weight: 700; line-height: 37px; }
.switch input { appearance: none; width: 70px; height: 37px; margin: 0; border: 2px solid #555; border-radius: 19px; background: radial-gradient(circle at 49px 50%, #2f7422 12px, #fff 13px); }
.map { flex: 1; padding: 22px 36px 31px 59px; display: flex; align-items: flex-start; justify-content: space-between; }
.france { width: 800px; height: 900px; overflow: visible; }
.zoom { flex: none; width: 62px; height: 62px; margin-top: 14px; padding: 0; display: grid; place-items: center; border: 0; border-radius: 6px; background: #efeff8; }
</style>
